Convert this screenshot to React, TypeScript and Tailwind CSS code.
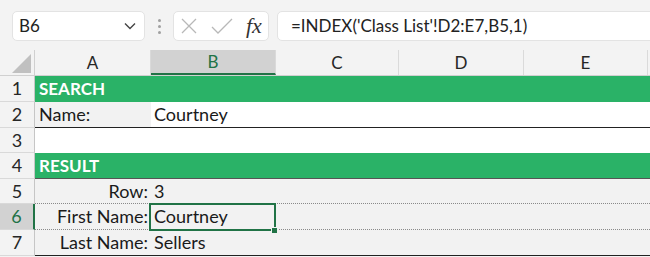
import React from 'react';

const cols = [
  { key: 'A', w: 'w-[116px]' },
  { key: 'B', w: 'w-[125px]' },
  { key: 'C', w: 'w-[123px]' },
  { key: 'D', w: 'w-[125px]' },
  { key: 'E', w: 'w-[124px]' },
];

const font = { fontFamily: 'Lato, "Noto Sans", sans-serif' };

const RowHead: React.FC<{ n: number; h: string; active?: boolean }> = ({ n, h, active }) => (
  <div
    className={`${h} w-[35px] shrink-0 flex items-center justify-center text-[18px] border-b border-[#d9d9d9] ${
      active
        ? 'bg-[#d2d2d2] text-[#217346] border-r-2 border-r-[#217346]'
        : 'bg-[#f3f3f3] text-[#262626] border-r border-r-[#c6c6c6]'
    }`}
  >
    {n}
  </div>
);

const Check = () => (
  <svg width="22" height="22" viewBox="0 0 22 22" fill="none" stroke="#b8b8b8" strokeWidth="1.3">
    <path d="M1 12l6 6L21 4" />
  </svg>
);

const Cross = () => (
  <svg width="16" height="16" viewBox="0 0 16 16" fill="none" stroke="#b8b8b8" strokeWidth="1.3">
    <path d="M1 1l14 14M15 1L1 15" />
  </svg>
);

export default function App() {
  return (
    <div className="w-[650px] h-[257px] overflow-hidden bg-[#f3f3f3] text-[#1a1a1a]" style={font}>
      {/* formula bar */}
      <div className="h-[50px] flex items-center pl-[12px] pt-[2px]">
        <div className="w-[133px] h-[30px] shrink-0 bg-white rounded-[5px] border border-[#e3e3e3] flex items-center justify-between pl-[6px] pr-[8px]">
          <span className="text-[17px] text-[#222]">B6</span>
          <svg width="12" height="8" viewBox="0 0 12 8" fill="none" stroke="#444" strokeWidth="1.4">
            <path d="M1 1.5l5 5 5-5" />
          </svg>
        </div>
        <div className="w-[28px] shrink-0 flex flex-col items-center gap-[3px]">
          <span className="w-[3px] h-[3px] rounded-full bg-[#a0a0a0]" />
          <span className="w-[3px] h-[3px] rounded-full bg-[#a0a0a0]" />
          <span className="w-[3px] h-[3px] rounded-full bg-[#a0a0a0]" />
        </div>
        <div className="w-[96px] h-[30px] shrink-0 bg-white rounded-[5px] border border-[#e3e3e3] flex items-center pl-[7px]">
          <Cross />
          <span className="ml-[14px]">
            <Check />
          </span>
          <span
            className="ml-[13px] text-[22px] italic text-[#333] leading-none"
            style={{ fontFamily: '"Liberation Serif", "DejaVu Serif", serif' }}
          >
            fx
          </span>
        </div>
        <div className="ml-[8px] w-[400px] h-[30px] shrink-0 bg-white rounded-[5px] border border-[#e3e3e3] flex items-center pl-[13px] text-[17px] text-[#222]">
          =INDEX('Class List'!D2:E7,B5,1)
        </div>
      </div>

      {/* column headers */}
      <div className="h-[26px] flex border-b border-[#d0d0d0]">
        <div className="w-[35px] shrink-0 relative border-r border-[#d0d0d0]">
          <div
            className="absolute right-[3px] bottom-[2px] w-[19px] h-[19px] bg-[#c0c0c0]"
            style={{ clipPath: 'polygon(100% 0, 100% 100%, 0 100%)' }}
          />
        </div>
        {cols.map((c) => (
          <div
            key={c.key}
            className={`${c.w} shrink-0 flex items-center justify-center text-[17px] border-r border-[#dadada] ${
              c.key === 'B'
                ? 'bg-[#d2d2d2] text-[#217346] border-b-2 border-b-[#217346]'
                : 'text-[#262626]'
            }`}
          >
            {c.key}
          </div>
        ))}
        <div className="flex-1" />
      </div>

      {/* row 1 */}
      <div className="flex">
        <RowHead n={1} h="h-[26px]" />
        <div className="flex-1 h-[26px] bg-[#2ab267] text-white font-bold text-[17px] flex items-center pl-[4px]">
          SEARCH
        </div>
      </div>

      {/* row 2 */}
      <div className="flex">
        <RowHead n={2} h="h-[26px]" />
        <div className="flex-1 flex h-[26px] border-b border-[#222] text-[18px]">
          <div className="w-[116px] shrink-0 bg-[#f2f2f2] flex items-center pl-[4px]">Name:</div>
          <div className="flex-1 bg-white flex items-center pl-[3px]">Courtney</div>
        </div>
      </div>

      {/* row 3 */}
      <div className="flex">
        <RowHead n={3} h="h-[25px]" />
        <div className="flex-1 h-[25px] bg-white" />
      </div>

      {/* row 4 */}
      <div className="flex">
        <RowHead n={4} h="h-[26px]" />
        <div className="flex-1 h-[26px] bg-[#2ab267] text-white font-bold text-[17px] flex items-center pl-[4px] border-b border-[#555]">
          RESULT
        </div>
      </div>

      {/* row 5 */}
      <div className="flex">
        <RowHead n={5} h="h-[25px]" />
        <div className="flex-1 flex h-[25px] bg-[#f2f2f2] border-b border-dotted border-[#8a8a8a] text-[18px]">
          <div className="w-[116px] shrink-0 flex items-center justify-end pr-[3px]">Row:</div>
          <div className="flex-1 flex items-center pl-[3px]">3</div>
        </div>
      </div>

      {/* row 6 */}
      <div className="flex">
        <RowHead n={6} h="h-[26px]" active />
        <div className="flex-1 flex h-[26px] bg-[#f2f2f2] border-b border-dotted border-[#8a8a8a] text-[18px] relative">
          <div className="w-[116px] shrink-0 flex items-center justify-end pr-[3px]">First Name:</div>
          <div className="flex-1 flex items-center pl-[3px]">Courtney</div>
          <div className="absolute left-[114px] top-[-1px] w-[127px] h-[28px] border-2 border-[#217346]" />
          <div className="absolute left-[236px] top-[23px] w-[7px] h-[7px] bg-[#217346] border border-[#f2f2f2]" />
        </div>
      </div>

      {/* row 7 */}
      <div className="flex">
        <RowHead n={7} h="h-[26px]" />
        <div className="flex-1 flex h-[26px] bg-[#f2f2f2] border-b border-[#222] text-[18px]">
          <div className="w-[116px] shrink-0 flex items-center justify-end pr-[3px]">Last Name:</div>
          <div className="flex-1 flex items-center pl-[3px]">Sellers</div>
        </div>
      </div>
    </div>
  );
}
